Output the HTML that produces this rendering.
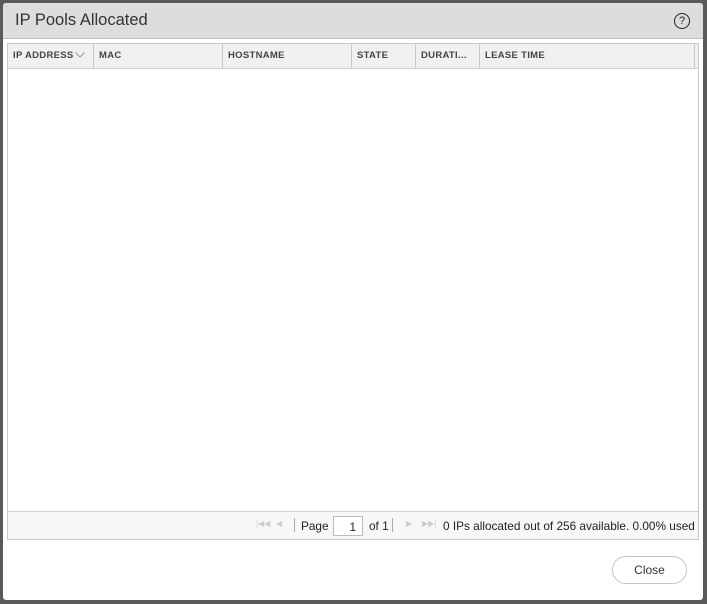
<!DOCTYPE html>
<html><head><style>
*{box-sizing:border-box;margin:0;padding:0}
body{width:707px;height:604px;background:#5a5a5a;font-family:"Liberation Sans",sans-serif;position:relative;overflow:hidden}
.dlg{position:absolute;left:3px;top:3px;width:700px;height:597px;background:#fff;border-radius:3px;overflow:hidden}
.hd{height:36px;background:#dcdddf;border-bottom:1px solid #bdbdbd;position:relative}
.hd span{position:absolute;left:12px;top:8px;font-size:16.5px;color:#333}
.help{position:absolute;right:13px;top:10px;width:16px;height:16px;border:1.2px solid #222;border-radius:50%;font-size:11px;text-align:center;line-height:14px;color:#222}
.grid{position:absolute;left:4px;top:40px;width:692px;height:497px;border:1px solid #c8c8c8}
.gh{height:25px;background:#eff0f0;border-bottom:1px solid #d0d0d0;display:flex;font-size:9.5px;font-weight:bold;color:#444;letter-spacing:.3px}
.gh div{border-right:1px solid #c8c8c8;padding:0 0 0 5px;line-height:24px;white-space:nowrap;overflow:hidden}
.ft{position:absolute;left:0;right:0;bottom:0;height:28px;background:#f6f7f7;border-top:1px solid #d0d0d0;font-size:11.8px;color:#222}
.ft .t{position:absolute;top:7px;white-space:nowrap}
.pg{position:absolute;left:325px;top:4px;width:30px;height:20px;border:1px solid #bbb;background:#fff;text-align:right;padding:3px 6px 0 0}
.sep{position:absolute;top:6px;width:1px;height:14px;background:#aaa}
.ar{position:absolute;top:7px;color:#ccc;font-size:8px}
.btn{position:absolute;left:609px;top:553px;width:75px;height:28px;border:1px solid #c4c4c4;border-radius:14px;text-align:center;line-height:26px;font-size:12px;color:#333;background:#fff}
</style></head><body>
<div class="dlg">
<div class="hd"><span>IP Pools Allocated</span><div class="help">?</div></div>
<div class="grid">
<div class="gh">
<div style="width:86px">IP ADDRESS<svg width="10" height="6" style="margin-left:1px;vertical-align:middle"><path d="M0.5 0.5 L5 5 L9.5 0.5" fill="none" stroke="#999" stroke-width="1"/></svg></div>
<div style="width:129px">MAC</div>
<div style="width:129px">HOSTNAME</div>
<div style="width:64px">STATE</div>
<div style="width:64px">DURATI...</div>
<div style="width:215px">LEASE TIME</div>
</div>
<div class="ft">
<span class="ar" style="left:248px">|◀◀</span><span class="ar" style="left:268px">◀</span>
<div class="sep" style="left:286px"></div>
<span class="t" style="left:293px">Page</span>
<div class="pg">1</div>
<span class="t" style="left:361px">of 1</span>
<div class="sep" style="left:384px"></div>
<span class="ar" style="left:398px">▶</span><span class="ar" style="left:414px">▶▶|</span>
<span class="t" style="left:435px">0 IPs allocated out of 256 available. 0.00% used</span>
</div>
</div>
<div class="btn">Close</div>
</div>
</body></html>
